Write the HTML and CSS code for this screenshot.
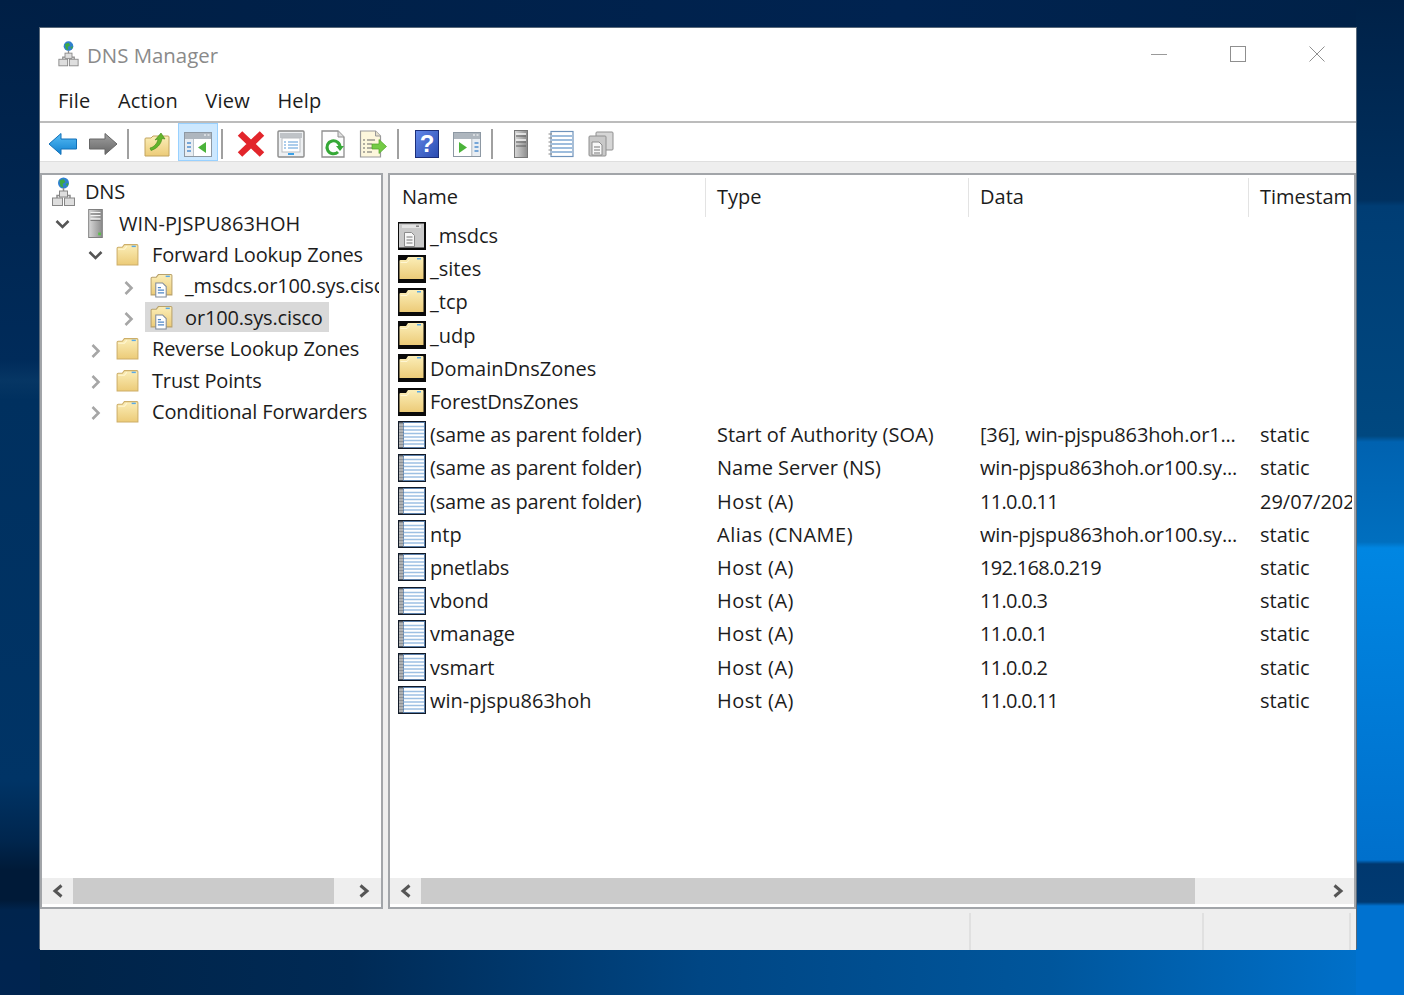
FILE: index.html
```html
<!DOCTYPE html>
<html lang="en">
<head>
  <meta charset="UTF-8">
  <title>DNS Manager</title>
  <link rel="stylesheet" href="styles.css">
</head>
<body>
  <svg class="defs" xmlns="http://www.w3.org/2000/svg">
    <defs>
      <linearGradient id="fld" x1="0" y1="0" x2="0" y2="1"><stop offset="0" stop-color="#fbeeb8"/><stop offset="1" stop-color="#eccb78"/></linearGradient>
      <linearGradient id="srv" x1="0" y1="0" x2="1" y2="0"><stop offset="0" stop-color="#d8d8d8"/><stop offset="1" stop-color="#8b8b8b"/></linearGradient>
      <linearGradient id="blu" x1="0" y1="0" x2="0" y2="1"><stop offset="0" stop-color="#58bdf5"/><stop offset="1" stop-color="#0f7fcf"/></linearGradient>
      <linearGradient id="gry" x1="0" y1="0" x2="0" y2="1"><stop offset="0" stop-color="#a0a0a0"/><stop offset="1" stop-color="#666"/></linearGradient>
      <linearGradient id="hlp" x1="0" y1="0" x2="1" y2="1"><stop offset="0" stop-color="#6388e8"/><stop offset="1" stop-color="#2a4bb0"/></linearGradient>

      <symbol id="folder" viewBox="0 0 24 24">
        <path d="M9 2.500h12a1 1 0 0 1 1 1V22H2V6a1 1 0 0 1 1-1h4z" fill="url(#fld)" stroke="#cdae68"/>
        <path d="M3 7h6l2.500-3" fill="none" stroke="#fff6d2"/>
        <rect x="16" y="3.500" width="4" height="1.400" fill="#5aa9e6"/>
      </symbol>
      <symbol id="zone" viewBox="0 0 24 24">
        <path d="M9 1.500h12a1 1 0 0 1 1 1V21H2V5a1 1 0 0 1 1-1h4z" fill="url(#fld)" stroke="#b9a26c"/>
        <rect x="16" y="2.500" width="4" height="1.400" fill="#5aa9e6"/>
        <path d="M6.500 9.500h6.500l3.500 3.500v10h-10z" fill="#fff" stroke="#7f8a99"/>
        <path d="M8.500 14h3M8.500 16.500h6M8.500 19h6" stroke="#4f86c6" stroke-width="1.200"/>
      </symbol>
      <symbol id="server" viewBox="0 0 24 32">
        <rect x="4.500" y="0.500" width="15" height="31" fill="url(#srv)" stroke="#777"/>
        <path d="M6.500 4h11M6.500 7h11M6.500 11h11" stroke="#f4f4f4" stroke-width="1.500"/>
        <path d="M6.500 5.500h11M6.500 12.500h11" stroke="#666"/>
        <rect x="15" y="26" width="3" height="3" fill="#58c048"/>
      </symbol>
      <symbol id="dns" viewBox="0 0 24 30">
        <circle cx="12" cy="6" r="5.500" fill="#2f80d0"/>
        <path d="M8 3.500l4-1.500 2 3-3 2 1 3.500-3-1zM14 7l3-1-1 3.500z" fill="#3da843"/>
        <path d="M12 11v5M5.500 21v-2.500h13V21" fill="none" stroke="#8d8d8d" stroke-width="1.500"/>
        <rect x="8" y="14" width="8" height="6" fill="#dedede" stroke="#868686"/>
        <rect x="1" y="21" width="10" height="7.500" fill="#dedede" stroke="#868686"/>
        <rect x="13" y="21" width="10" height="7.500" fill="#dedede" stroke="#868686"/>
      </symbol>

      <symbol id="list-folder" viewBox="0 0 28 28">
        <rect width="28" height="28" fill="#0a0a0a"/>
        <path d="M10 2h14.500a1 1 0 0 1 1 1v21H1.500V6a1 1 0 0 1 1-1H8z" fill="url(#fld)"/>
        <path d="M2.500 7.500H9l2.500-3" fill="none" stroke="#fff6d2"/>
        <rect x="19" y="3" width="4" height="1.500" fill="#5aa9e6"/>
      </symbol>
      <symbol id="list-zone" viewBox="0 0 28 28">
        <rect width="28" height="28" fill="#0a0a0a"/>
        <rect x="1" y="1.500" width="25" height="24" fill="#c9c9c9"/>
        <path d="M4 3h19v3H4z" fill="#e4e4e4"/>
        <rect x="18" y="3.500" width="3" height="1.400" fill="#777"/>
        <path d="M6.500 10.500h7l3 3v11h-10z" fill="#f7f7f7" stroke="#8c8c8c"/>
        <path d="M8.500 15h6M8.500 18h6M8.500 21h6" stroke="#777"/>
      </symbol>
      <symbol id="list-record" viewBox="0 0 28 28">
        <rect width="28" height="28" fill="#111a28"/>
        <rect x="1" y="1.500" width="5" height="25" fill="#8e9296"/>
        <rect x="5.500" y="1.500" width="21" height="25" fill="#fff" stroke="#5f83ad"/>
        <path d="M6 5.500h20M6 9h20M6 12.500h20M6 16h20M6 19.500h20M6 23h20" stroke="#9dc0e3" stroke-width="1.500"/>
        <path d="M1 4h4.500M1 7h4.500M1 10h4.500M1 13h4.500M1 16h4.500M1 19h4.500M1 22h4.500M1 25h4.500" stroke="#d0d0d0"/>
      </symbol>

      <symbol id="chev-down" viewBox="0 0 16 16"><path d="M2 5l6 6 6-6" fill="none" stroke="#555" stroke-width="2.600"/></symbol>
      <symbol id="chev-right" viewBox="0 0 16 16"><path d="M5 2l6 6-6 6" fill="none" stroke="#a6a6a6" stroke-width="2.600"/></symbol>
      <symbol id="sb-left" viewBox="0 0 14 14"><path d="M10.500 1.500L4 7l6.500 5.500" fill="none" stroke="#555" stroke-width="3"/></symbol>
      <symbol id="sb-right" viewBox="0 0 14 14"><path d="M3.500 1.500L10 7l-6.500 5.500" fill="none" stroke="#555" stroke-width="3"/></symbol>
    </defs>
  </svg>

  <div class="window">
    <div class="titlebar">
      <svg class="app-icon"><use href="#dns"/></svg>
      <span class="app-title">DNS Manager</span>
      <div class="caption">
        <span class="cap-btn"><span class="cap-min"></span></span>
        <span class="cap-btn"><span class="cap-max"></span></span>
        <span class="cap-btn">
          <svg class="cap-close" viewBox="0 0 16 16"><path d="M0.500 0.500l15 15M15.500 0.500l-15 15" stroke="#8f8f8f" fill="none"/></svg>
        </span>
      </div>
    </div>

    <div class="menubar">
      <span>File</span>
      <span>Action</span>
      <span>View</span>
      <span>Help</span>
    </div>

    <div class="toolbar">
      <span class="tool"><svg viewBox="0 0 30 24" width="30" height="24"><path d="M1 12L13 1.500V7h15.500v10H13v5.500z" fill="url(#blu)" stroke="#1270b8"/></svg></span>
      <span class="tool"><svg viewBox="0 0 30 24" width="30" height="24"><path d="M29 12L17 1.500V7H1.500v10H17v5.500z" fill="url(#gry)" stroke="#666"/></svg></span>
      <span class="sep"></span>
      <span class="tool"><svg viewBox="0 0 26 26" width="26" height="26">
        <path d="M9 5h15a1 1 0 0 1 1 1v19H1V8a1 1 0 0 1 1-1h5z" fill="url(#fld)" stroke="#c2a45f"/>
        <path d="M6 17c4-1 7-4 8-9l-3 1 6-7 4 6-3-.5c-1 6-5 10-11 12z" fill="#63b42c" stroke="#3f8a18" stroke-width=".6"/>
      </svg></span>
      <span class="tool tool-on"><svg viewBox="0 0 28 26" width="28" height="26">
        <rect x="0.500" y="1.500" width="27" height="24" fill="#fff" stroke="#8d98a3"/>
        <rect x="1" y="2" width="26" height="6" fill="#aeb6be"/>
        <path d="M20 4h2M23.500 4h2" stroke="#fff"/>
        <path d="M9.500 8v17" stroke="#8d98a3"/>
        <rect x="1" y="8" width="8.500" height="17" fill="#e8edf2"/>
        <path d="M3 12h4M3 16h4M3 20h4" stroke="#4f8fd0" stroke-width="1.600"/>
        <path d="M22 11v11l-8-5.500z" fill="#4bb33a"/>
      </svg></span>
      <span class="sep"></span>
      <span class="tool"><svg viewBox="0 0 28 28" width="28" height="28"><path d="M3 3.500l22 21M25 3.500l-22 21" stroke="#e2252b" stroke-width="6.500"/></svg></span>
      <span class="tool tool-gap"><svg viewBox="0 0 28 28" width="28" height="28">
        <rect x="1" y="1" width="26" height="26" rx="1" fill="#eef0f2" stroke="#8b8b8b" stroke-width="1.400"/>
        <rect x="3" y="3" width="22" height="5" fill="#bfc3c7"/>
        <rect x="5" y="8" width="18" height="14" fill="#fff" stroke="#b8bcc0"/>
        <path d="M7 12h2M11 12h10M7 15h2M11 15h10M7 18h2M11 18h10" stroke="#5a9bd8" stroke-width="1.200"/>
        <rect x="11" y="23" width="6" height="2" fill="#3aa0e6"/>
      </svg></span>
      <span class="tool"><svg viewBox="0 0 26 28" width="26" height="28">
        <path d="M2 1h16l6 6v20H2z" fill="#fdfdfd" stroke="#8f8f8f" stroke-width="1.300"/>
        <path d="M18 1v6h6" fill="#dedede" stroke="#8f8f8f"/>
        <path d="M18 22a6.500 6.500 0 1 1 2-4.500" fill="none" stroke="#35a836" stroke-width="3"/>
        <path d="M16 16h8l-4 5z" fill="#35a836"/>
      </svg></span>
      <span class="tool"><svg viewBox="0 0 28 28" width="28" height="28">
        <path d="M1.500 1h15l5 5v21h-20z" fill="#fdf7dc" stroke="#9a9a9a" stroke-width="1.200"/>
        <path d="M16.500 1v5h5" fill="#e4e0cc" stroke="#9a9a9a"/>
        <path d="M4 10h2M8 10h8M4 14h2M8 14h5M4 18h2M8 18h5M4 22h2M8 22h5" stroke="#666" stroke-width="1.200"/>
        <path d="M13 14h7V9.500l7.500 7-7.500 7V19h-7z" fill="#74cb45" stroke="#4ea326" stroke-width=".7"/>
      </svg></span>
      <span class="sep"></span>
      <span class="tool"><svg viewBox="0 0 24 28" width="24" height="28">
        <rect x="0.500" y="0.500" width="23" height="27" fill="url(#hlp)" stroke="#1c2f7a"/>
        <text class="help-mark" x="12" y="22" text-anchor="middle">?</text>
      </svg></span>
      <span class="tool"><svg viewBox="0 0 28 26" width="28" height="26">
        <rect x="0.500" y="1.500" width="27" height="24" fill="#fff" stroke="#8d98a3"/>
        <rect x="1" y="2" width="26" height="6" fill="#aeb6be"/>
        <path d="M20 4h2M23.500 4h2" stroke="#fff"/>
        <path d="M19 8v17" stroke="#8d98a3"/>
        <rect x="19.500" y="8" width="7.500" height="17" fill="#e8edf2"/>
        <path d="M21.500 12h4M21.500 16h4M21.500 20h4" stroke="#4f8fd0" stroke-width="1.600"/>
        <path d="M6 11v11l8-5.500z" fill="#4bb33a"/>
      </svg></span>
      <span class="sep"></span>
      <span class="tool"><svg viewBox="0 0 16 28" width="16" height="28">
        <rect x="1.500" y="0.500" width="13" height="27" fill="url(#srv)" stroke="#777"/>
        <path d="M3 4h10M3 10h10" stroke="#f4f4f4" stroke-width="1.600"/>
        <path d="M3 6h10M3 12h10M3 16h10" stroke="#5c5c5c"/>
      </svg></span>
      <span class="tool"><svg viewBox="0 0 26 28" width="26" height="28">
        <rect x="3" y="1.500" width="22" height="25" fill="#fff" stroke="#6f93bb" stroke-width="1.200"/>
        <path d="M4 6h20M4 10h20M4 14h20M4 18h20M4 22h20" stroke="#7fa8d2" stroke-width="1.600"/>
        <path d="M0.500 4h3.500M0.500 8h3.500M0.500 12h3.500M0.500 16h3.500M0.500 20h3.500M0.500 24h3.500" stroke="#888"/>
      </svg></span>
      <span class="tool"><svg viewBox="0 0 26 26" width="26" height="26">
        <rect x="8" y="1" width="17" height="18" rx="1" fill="#d6d6d6" stroke="#909090"/>
        <rect x="1" y="5" width="17" height="20" rx="1" fill="#c9c9c9" stroke="#909090"/>
        <path d="M4 11h7l3 3v10H4z" fill="#f8f8f8" stroke="#8c8c8c"/>
        <path d="M6 16h6M6 19h6M6 22h6" stroke="#777"/>
      </svg></span>
    </div>

    <div class="band"></div>

    <div class="panes">
      <div class="pane pane-tree">
        <div class="pane-body">
          <div class="node lvl-root"><span class="item"><svg class="ico ico-dns"><use href="#dns"/></svg><span class="label">DNS</span></span></div>
          <div class="node lvl1"><svg class="tw tw-open"><use href="#chev-down"/></svg><span class="item"><svg class="ico ico-srv"><use href="#server"/></svg><span class="label">WIN-PJSPU863HOH</span></span></div>
          <div class="node lvl2"><svg class="tw tw-open"><use href="#chev-down"/></svg><span class="item"><svg class="ico"><use href="#folder"/></svg><span class="label">Forward Lookup Zones</span></span></div>
          <div class="node lvl3"><svg class="tw"><use href="#chev-right"/></svg><span class="item"><svg class="ico"><use href="#zone"/></svg><span class="label">_msdcs.or100.sys.cisco</span></span></div>
          <div class="node lvl3"><svg class="tw"><use href="#chev-right"/></svg><span class="item selected"><svg class="ico"><use href="#zone"/></svg><span class="label">or100.sys.cisco</span></span></div>
          <div class="node lvl2"><svg class="tw"><use href="#chev-right"/></svg><span class="item"><svg class="ico"><use href="#folder"/></svg><span class="label">Reverse Lookup Zones</span></span></div>
          <div class="node lvl2"><svg class="tw"><use href="#chev-right"/></svg><span class="item"><svg class="ico"><use href="#folder"/></svg><span class="label">Trust Points</span></span></div>
          <div class="node lvl2"><svg class="tw"><use href="#chev-right"/></svg><span class="item"><svg class="ico"><use href="#folder"/></svg><span class="label">Conditional Forwarders</span></span></div>
        </div>
        <div class="hscroll">
          <span class="sb-btn"><svg><use href="#sb-left"/></svg></span>
          <span class="sb-track"><span class="sb-thumb thumb-tree"></span></span>
          <span class="sb-btn"><svg><use href="#sb-right"/></svg></span>
        </div>
      </div>

      <div class="pane pane-list">
        <div class="pane-body">
          <div class="list-head">
            <div class="col">Name</div>
            <div class="col">Type</div>
            <div class="col">Data</div>
            <div class="col">Timestamp</div>
          </div>
          <div class="row"><div class="name"><svg class="rec"><use href="#list-zone"/></svg>_msdcs</div></div>
          <div class="row"><div class="name"><svg class="rec"><use href="#list-folder"/></svg>_sites</div></div>
          <div class="row"><div class="name"><svg class="rec"><use href="#list-folder"/></svg>_tcp</div></div>
          <div class="row"><div class="name"><svg class="rec"><use href="#list-folder"/></svg>_udp</div></div>
          <div class="row"><div class="name"><svg class="rec"><use href="#list-folder"/></svg>DomainDnsZones</div></div>
          <div class="row"><div class="name tight"><svg class="rec"><use href="#list-folder"/></svg>ForestDnsZones</div></div>
          <div class="row"><div class="name tight"><svg class="rec"><use href="#list-record"/></svg>(same as parent folder)</div><div>Start of Authority (SOA)</div><div class="hostname">[36], win-pjspu863hoh.or1...</div><div>static</div></div>
          <div class="row"><div class="name tight"><svg class="rec"><use href="#list-record"/></svg>(same as parent folder)</div><div>Name Server (NS)</div><div class="hostname">win-pjspu863hoh.or100.sy...</div><div>static</div></div>
          <div class="row"><div class="name tight"><svg class="rec"><use href="#list-record"/></svg>(same as parent folder)</div><div class="wide">Host (A)</div><div class="num">11.0.0.11</div><div>29/07/2020</div></div>
          <div class="row"><div class="name"><svg class="rec"><use href="#list-record"/></svg>ntp</div><div class="wide">Alias (CNAME)</div><div class="hostname">win-pjspu863hoh.or100.sy...</div><div>static</div></div>
          <div class="row"><div class="name tight"><svg class="rec"><use href="#list-record"/></svg>pnetlabs</div><div class="wide">Host (A)</div><div class="num">192.168.0.219</div><div>static</div></div>
          <div class="row"><div class="name"><svg class="rec"><use href="#list-record"/></svg>vbond</div><div class="wide">Host (A)</div><div class="num">11.0.0.3</div><div>static</div></div>
          <div class="row"><div class="name"><svg class="rec"><use href="#list-record"/></svg>vmanage</div><div class="wide">Host (A)</div><div class="num">11.0.0.1</div><div>static</div></div>
          <div class="row"><div class="name"><svg class="rec"><use href="#list-record"/></svg>vsmart</div><div class="wide">Host (A)</div><div class="num">11.0.0.2</div><div>static</div></div>
          <div class="row"><div class="name"><svg class="rec"><use href="#list-record"/></svg>win-pjspu863hoh</div><div class="wide">Host (A)</div><div class="num">11.0.0.11</div><div>static</div></div>
        </div>
        <div class="hscroll">
          <span class="sb-btn"><svg><use href="#sb-left"/></svg></span>
          <span class="sb-track"><span class="sb-thumb thumb-list"></span></span>
          <span class="sb-btn"><svg><use href="#sb-right"/></svg></span>
        </div>
      </div>
    </div>

    <div class="statusbar">
      <span class="cell cell-wide"></span>
      <span class="cell cell-last"></span>
    </div>
  </div>
</body>
</html>
```

FILE: styles.css
```css
html, body {
  height: 100%;
}
body {
  margin: 0;
  box-sizing: border-box;
  width: 1404px;
  height: 995px;
  overflow: hidden;
  padding: 28px 48px 45px 40px;
  font-family: "Open Sans", "Noto Sans", sans-serif;
  color: #1c1c1c;
  background-color: #00244e;
  background-image:
    linear-gradient(180deg, #001f45 0, #002b5a 360px, #063664 380px, #00305f 400px, #003466 780px, #00264e 840px, #001a38 870px, #001a38 900px, #00244d 910px, #002450 995px),
    linear-gradient(180deg, #002147 0, #00305f 200px, #003d74 206px, #004880 436px, #0062b0 442px, #006fbf 542px, #0086e2 548px, #0070cc 860px, #00386f 864px, #003a72 902px, #0072d0 906px, #0072d0 995px),
    linear-gradient(90deg, #001f45 0, #002350 900px, #002147 1404px),
    linear-gradient(90deg, #002246 0, #002a55 350px, #004684 700px, #00569c 1050px, #0074d0 1404px);
  background-size: 40px 100%, 48px 100%, 100% 28px, 100% 45px;
  background-position: left top, right top, left top, left bottom;
  background-repeat: no-repeat;
}
.defs {
  display: block;
  width: 0;
  height: 0;
}

.window {
  width: 1316px;
  height: 922px;
  background: #fff;
  display: flex;
  flex-direction: column;
  box-shadow: -1px -1px 0 #59697a, 1px -1px 0 #59697a;
}

.titlebar {
  height: 52px;
  display: flex;
  align-items: center;
  padding-left: 18px;
}
.app-icon {
  width: 21px;
  height: 28px;
  margin-right: 8px;
}
.app-title {
  font-size: 20.4px;
  color: #8a8a8a;
  padding-top: 1px;
}
.caption {
  margin-left: auto;
  display: flex;
}
.cap-btn {
  width: 79px;
  height: 36px;
  display: flex;
  align-items: center;
  justify-content: center;
}
.cap-min {
  width: 16px;
  height: 1px;
  background: #9a9a9a;
}
.cap-max {
  width: 14px;
  height: 14px;
  border: 1px solid #8f8f8f;
}
.cap-close {
  width: 16px;
  height: 16px;
}

.menubar {
  height: 41px;
  display: flex;
  align-items: center;
  gap: 27.5px;
  padding-left: 18px;
  font-size: 20px;
  letter-spacing: .2px;
  border-bottom: 2px solid #bcbcbc;
}

.toolbar {
  height: 38px;
  display: flex;
  align-items: center;
  padding-left: 3px;
  border-bottom: 1px solid #dfdfdf;
}
.tool {
  width: 40px;
  height: 38px;
  display: flex;
  align-items: center;
  justify-content: center;
  flex: none;
}
.tool svg {
  margin-top: 3px;
}
.tool-on {
  background: #cce8ff;
  border: 1px solid #99d1ff;
  box-sizing: border-box;
  margin-left: 1px;
  margin-right: -1px;
}
.tool-gap {
  margin-right: 2px;
}
.sep {
  width: 2px;
  height: 30px;
  margin: 3px 8px 0 4px;
  background: #a0a0a0;
  flex: none;
}
.help-mark {
  font-family: "Liberation Sans", sans-serif;
  font-size: 24px;
  font-weight: bold;
  fill: #fff;
}

.band {
  height: 11px;
  background: #eeeeee;
}

.panes {
  flex: 1;
  min-height: 0;
  display: flex;
  gap: 5px;
  background: #eeeeee;
}
.pane {
  box-sizing: border-box;
  border: 2px solid #a2a5a9;
  background: #fff;
  display: flex;
  flex-direction: column;
  overflow: hidden;
}
.pane-tree {
  width: 343px;
}
.pane-list {
  flex: 1;
  min-width: 0;
}
.pane-body {
  flex: 1;
  min-height: 0;
  overflow: hidden;
  padding-top: 1px;
  margin-right: 2px;
}

/* tree */
.node {
  height: 31.4px;
  display: flex;
  align-items: center;
  font-size: 20px;
  letter-spacing: -.15px;
  white-space: nowrap;
}
.lvl-root { padding-left: 5px; }
.lvl1 { padding-left: 4px; }
.lvl2 { padding-left: 37px; }
.lvl3 { padding-left: 70px; }
.tw {
  width: 33px;
  height: 16px;
  margin-top: 4px;
  flex: none;
}
.tw-open {
  margin-top: 2px;
}
.item {
  display: flex;
  align-items: center;
  height: 30px;
}
.item .ico {
  width: 33px;
  height: 25px;
  flex: none;
}
.lvl2 .ico {
  margin: 0 1px 0 -1px;
}
.item .ico-dns {
  height: 30px;
}
.item .ico-srv {
  height: 29px;
}
.label {
  margin-left: 7px;
  padding-right: 6px;
}
.lvl1 .label {
  letter-spacing: .1px;
}
.lvl-root .label {
  margin-left: 5px;
}
.selected {
  background: #d9d9d9;
}

/* scrollbars */
.hscroll {
  height: 26px;
  margin-bottom: 3px;
  background: #eeeeee;
  display: flex;
  flex: none;
}
.sb-btn {
  width: 31px;
  display: flex;
  align-items: center;
  justify-content: center;
  flex: none;
}
.sb-btn svg {
  width: 14px;
  height: 14px;
}
.pane-tree .sb-btn:last-child {
  padding-right: 4px;
  box-sizing: border-box;
}
.pane-list .sb-btn:last-child {
  padding-right: 2px;
  box-sizing: border-box;
}
.sb-track {
  flex: 1;
  min-width: 0;
}
.sb-thumb {
  display: block;
  height: 100%;
  background: #cbcbcb;
}
.thumb-tree {
  width: 261px;
}
.thumb-list {
  width: 774px;
}

/* record list */
.list-head, .row {
  display: grid;
  grid-template-columns: 316px 263px 280px 1fr;
}
.list-head {
  height: 43px;
  align-items: center;
  font-size: 20px;
}
.col {
  height: 39px;
  line-height: 37px;
  padding-left: 11px;
  border-right: 1px solid #e3e3e3;
  white-space: nowrap;
}
.col:first-child {
  padding-left: 12px;
}
.col:last-child {
  border-right: 0;
  overflow: hidden;
}
.row {
  height: 33.2px;
  font-size: 20px;
  align-items: center;
  white-space: nowrap;
}
.row > div {
  padding-left: 11px;
  overflow: hidden;
}
.row > .name {
  padding-left: 8px;
  display: flex;
  align-items: center;
}
.row > .tight {
  letter-spacing: -.2px;
}
.row > .wide {
  letter-spacing: .48px;
}
.row > .hostname {
  letter-spacing: -.17px;
}
.row > .num {
  letter-spacing: -.7px;
}
.rec {
  width: 28px;
  height: 28px;
  margin-right: 4px;
  flex: none;
}

.statusbar {
  height: 41px;
  flex: none;
  background: #eeeeee;
  display: flex;
  justify-content: flex-end;
  padding: 4px 5px 0 0;
  box-sizing: border-box;
}
.cell {
  border-left: 2px solid #e0e0e0;
  box-sizing: border-box;
}
.cell-wide {
  width: 233px;
}
.cell-last {
  width: 149px;
  border-right: 2px solid #e0e0e0;
}
```
